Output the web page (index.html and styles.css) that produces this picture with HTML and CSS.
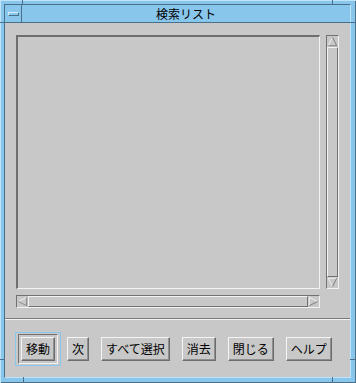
FILE: index.html
```html
<!DOCTYPE html>
<html lang="ja">
<head>
    <meta charset="UTF-8">
    <title>検索リスト</title>
    <link rel="stylesheet" href="styles.css">
</head>
<body>
    <div class="window">
        <span class="tick tick-tl-h"></span>
        <span class="tick tick-tl-v"></span>
        <span class="tick tick-tr-h"></span>
        <span class="tick tick-tr-v"></span>
        <span class="tick tick-bl-h"></span>
        <span class="tick tick-bl-v"></span>
        <span class="tick tick-br-h"></span>
        <span class="tick tick-br-v"></span>
        <div class="inner">
            <div class="titlebar">
                <div class="menu-btn"><span class="menu-bar"></span></div>
                <div class="title">検索リスト</div>
            </div>
            <div class="client">
                <div class="list-row">
                    <div class="list"></div>
                    <div class="vscroll">
                        <svg class="arrow" viewBox="0 0 13 13" width="13" height="13">
                            <polygon points="6.5,1.5 11.5,11.5 1.5,11.5" fill="#c8c8c8"/>
                            <polyline points="1.5,11.5 6.5,1.5" fill="none" stroke="#f4f4f4"/>
                            <polyline points="6.5,1.5 11.5,11.5 1.5,11.5" fill="none" stroke="#727272"/>
                        </svg>
                        <div class="slider"></div>
                        <svg class="arrow" viewBox="0 0 13 13" width="13" height="13">
                            <polygon points="1.5,1.5 11.5,1.5 6.5,11.5" fill="#c8c8c8"/>
                            <polyline points="6.5,11.5 1.5,1.5 11.5,1.5" fill="none" stroke="#f4f4f4"/>
                            <polyline points="11.5,1.5 6.5,11.5" fill="none" stroke="#727272"/>
                        </svg>
                    </div>
                </div>
                <div class="hscroll">
                    <svg class="arrow" viewBox="0 0 13 13" width="13" height="13">
                        <polygon points="1.5,6.5 11.5,1.5 11.5,11.5" fill="#c8c8c8"/>
                        <polyline points="11.5,1.5 1.5,6.5 11.5,11.5" fill="none" stroke="#f4f4f4"/>
                        <polyline points="11.5,1.5 11.5,11.5 1.5,6.5" fill="none" stroke="#727272"/>
                    </svg>
                    <div class="slider"></div>
                    <svg class="arrow" viewBox="0 0 13 13" width="13" height="13">
                        <polygon points="1.5,1.5 11.5,6.5 1.5,11.5" fill="#c8c8c8"/>
                        <polyline points="1.5,11.5 1.5,1.5 11.5,6.5" fill="none" stroke="#f4f4f4"/>
                        <polyline points="11.5,6.5 1.5,11.5" fill="none" stroke="#727272"/>
                    </svg>
                </div>
                <div class="separator"></div>
                <div class="buttons">
                    <div class="focus-ring">
                        <div class="default-ring">
                            <button class="btn">移動</button>
                        </div>
                    </div>
                    <button class="btn">次</button>
                    <button class="btn">すべて選択</button>
                    <button class="btn">消去</button>
                    <button class="btn">閉じる</button>
                    <button class="btn">ヘルプ</button>
                </div>
            </div>
        </div>
    </div>
</body>
</html>
```
FILE: styles.css
```css
body {
    margin: 0;
    background-color: #88c6ec;
    font-family: "Noto Sans CJK JP", "DejaVu Sans", sans-serif;
}
.window {
    position: relative;
    width: 356px;
    height: 383px;
    box-sizing: border-box;
    padding: 4px 5px 5px 4px;
    background-color: #88c6ec;
    box-shadow: inset 1px 1px 0 #bfe3f9, inset -1px -1px 0 #4a6f8a;
}
.tick {
    position: absolute;
    background-color: #4a6f8a;
}
.tick-tl-h { left: 0; top: 22px; width: 5px; height: 1px; }
.tick-tl-v { left: 22px; top: 0; width: 1px; height: 5px; }
.tick-tr-h { right: 0; top: 22px; width: 6px; height: 1px; }
.tick-tr-v { left: 332px; top: 0; width: 1px; height: 5px; }
.tick-bl-h { left: 0; top: 359px; width: 5px; height: 1px; }
.tick-bl-v { left: 23px; bottom: 0; width: 1px; height: 6px; }
.tick-br-h { right: 0; top: 359px; width: 6px; height: 1px; }
.tick-br-v { left: 332px; bottom: 0; width: 1px; height: 6px; }
.inner {
    height: 100%;
    box-sizing: border-box;
    border: 1px solid;
    border-color: #4a6f8a #bfe3f9 #bfe3f9 #4a6f8a;
    display: flex;
    flex-direction: column;
}
.titlebar {
    display: flex;
    height: 17px;
    border-bottom: 1px solid #4a6f8a;
    background-color: #88c6ec;
}
.menu-btn {
    width: 16px;
    border-right: 1px solid #4a6f8a;
    display: flex;
    align-items: center;
    justify-content: center;
}
.menu-bar {
    width: 9px;
    height: 2px;
    border: 1px solid;
    border-color: #d8eefc #4a6f8a #4a6f8a #d8eefc;
    margin-top: 1px;
}
.title {
    flex: 1;
    text-align: center;
    font-size: 12px;
    line-height: 17px;
    color: #000;
}
.client {
    flex: 1;
    background-color: #c8c8c8;
    padding: 12px 0 0 11px;
}
.list-row {
    display: flex;
    gap: 6px;
}
.list {
    width: 304px;
    height: 254px;
    box-sizing: border-box;
    border-style: solid;
    border-width: 2px 1px 1px 2px;
    border-color: #6e6e6e #f2f2f2 #f2f2f2 #6e6e6e;
}
.vscroll {
    width: 13px;
    height: 254px;
    box-sizing: border-box;
    display: flex;
    flex-direction: column;
    border: 1px solid;
    border-color: #727272 #f2f2f2 #f2f2f2 #727272;
}
.vscroll .arrow, .hscroll .arrow {
    display: block;
    flex: none;
    width: 11px;
    height: 11px;
}
.slider {
    flex: 1;
    border: 1px solid;
    border-color: #f2f2f2 #727272 #727272 #f2f2f2;
}
.hscroll {
    margin-top: 6px;
    width: 304px;
    height: 13px;
    box-sizing: border-box;
    display: flex;
    border: 1px solid;
    border-color: #727272 #f2f2f2 #f2f2f2 #727272;
}
.separator {
    margin: 10px 0 0 -11px;
    height: 1px;
    border-top: 1px solid #7a7a7a;
    background-color: #f2f2f2;
}
.buttons {
    display: flex;
    align-items: center;
    gap: 12px;
    margin-top: 17px;
    padding-left: 5px;
}
.focus-ring {
    margin: -5px -6px;
    padding: 1px 2px;
    border: 1px solid #88c6ec;
}
.default-ring {
    padding: 2px;
    border: 1px solid;
    border-color: #727272 #f2f2f2 #f2f2f2 #727272;
    display: flex;
}
.btn {
    height: 24px;
    margin: 0;
    padding: 0 4px;
    font-family: "Noto Sans CJK JP", "DejaVu Sans", sans-serif;
    font-size: 12px;
    line-height: 20px;
    color: #000;
    background-color: #c8c8c8;
    border: 1px solid;
    border-color: #f4f4f4 #6c6c6c #6c6c6c #f4f4f4;
    box-shadow: inset -1px -1px 0 #8e8e8e;
}
```
